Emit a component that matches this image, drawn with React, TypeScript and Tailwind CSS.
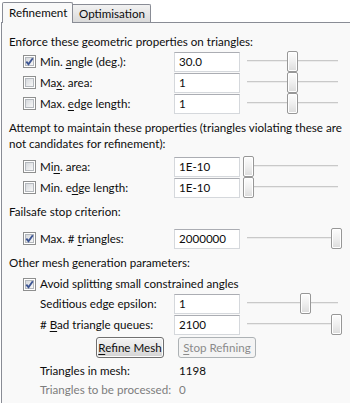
import React from 'react';

type Mn = { pre: string; key: string; post: string };

function Label({ m, className = '' }: { m: Mn; className?: string }) {
  return (
    <span className={className}>
      {m.pre}
      <span className="underline underline-offset-[2px]">{m.key}</span>
      {m.post}
    </span>
  );
}

function Check({ checked }: { checked?: boolean }) {
  return (
    <span className="relative flex h-[13px] w-[13px] shrink-0 items-center justify-center border border-[#8e8f8f] bg-white">
      <span className="h-[9px] w-[9px] border border-[#b4b8bd] bg-gradient-to-br from-[#d6d9dd] to-[#f7f7f7]" />
      {checked && (
        <svg className="absolute left-0 top-0" width="11" height="11" viewBox="0 0 11 11">
          <path d="M2.3 5.6 L4.5 8.2 L8.8 2.3" fill="none" stroke="#3d5593" strokeWidth="1.9" />
        </svg>
      )}
    </span>
  );
}

function Field({ value }: { value: string }) {
  return (
    <div className="flex h-[20px] w-[66px] shrink-0 items-center border border-[#d5d8dc] border-t-[#abadb3] bg-white pl-[4px]">
      {value}
    </div>
  );
}

function Slider({ pos }: { pos: number }) {
  return (
    <div className="relative ml-[3px] h-[21px] w-[99px] shrink-0">
      <div className="absolute left-[4px] right-[4px] top-[9px] h-[2px] border-t border-[#c9c9c9] bg-[#ececec]" />
      <div
        className="absolute top-0 h-[21px] w-[11px] rounded-[2px] border border-[#979797] bg-gradient-to-b from-[#fdfdfd] via-[#efefef] to-[#dcdcdc] shadow-[inset_0_0_0_1px_#ffffff]"
        style={{ left: pos }}
      />
    </div>
  );
}

function Row({
  m,
  check,
  value,
  pos,
}: {
  m: Mn;
  check?: boolean;
  value: string;
  pos: number;
}) {
  return (
    <div className="flex h-[21px] items-center">
      <div className="flex w-[165px] shrink-0 items-center gap-[4px] pl-[14px]">
        {check !== undefined ? <Check checked={check} /> : <span className="w-[13px]" />}
        <Label m={m} />
      </div>
      <Field value={value} />
      <Slider pos={pos} />
    </div>
  );
}

export default function App() {
  return (
    <div className="h-[403px] w-[350px] overflow-hidden whitespace-nowrap bg-white font-['Lato',sans-serif] text-[11.6px] leading-[16px] text-[#0d0d0d]">
      {/* tabs */}
      <div className="flex h-[22px] items-end pl-[2px]">
        <div className="relative z-10 -mb-px flex h-[21px] w-[71px] items-center rounded-t-[2px] border border-b-0 border-[#898c95] bg-[#f9f9f9] pl-[6px]">
          Refinement
        </div>
        <div className="flex h-[18px] w-[78px] items-center rounded-tr-[2px] border border-b-0 border-l-0 border-[#898c95] bg-gradient-to-b from-[#f2f2f2] to-[#dadada] pl-[6px]">
          Optimisation
        </div>
      </div>

      {/* pane */}
      <div className="ml-[1px] h-[381px] border-l border-t border-[#898c95] bg-[#f9f9f9] pl-[7px] pt-[11px]">
        <div>Enforce these geometric properties on triangles:</div>
        <div className="mt-px">
          <Row m={{ pre: 'Min. ', key: 'a', post: 'ngle (deg.):' }} check value="30.0" pos={44} />
          <Row m={{ pre: 'Ma', key: 'x', post: '. area:' }} check={false} value="1" pos={44} />
          <Row m={{ pre: 'Max. ', key: 'e', post: 'dge length:' }} check={false} value="1" pos={44} />
        </div>

        <div className="mt-[6px]">
          Attempt to maintain these properties (triangles violating these are
          <br />
          not candidates for refinement):
        </div>
        <div className="mt-[4px]">
          <Row m={{ pre: 'Mi', key: 'n', post: '. area:' }} check={false} value="1E-10" pos={0} />
          <Row m={{ pre: 'Min. e', key: 'd', post: 'ge length:' }} check={false} value="1E-10" pos={0} />
        </div>

        <div className="mt-[6px]">Failsafe stop criterion:</div>
        <div className="mt-[8px]">
          <Row m={{ pre: 'Max. # ', key: 't', post: 'riangles:' }} check value="2000000" pos={88} />
        </div>

        <div className="mt-[6px]">Other mesh generation parameters:</div>
        <div className="mt-[4px] flex h-[18px] items-center gap-[4px] pl-[14px]">
          <Check checked />
          <span>Avoid splitting small constrained angles</span>
        </div>
        <Row m={{ pre: 'Seditious edge epsilon:', key: '', post: '' }} value="1" pos={57} />
        <Row m={{ pre: '# ', key: 'B', post: 'ad triangle queues:' }} value="2100" pos={88} />

        <div className="mt-[2px] flex h-[21px] items-center">
          <div className="flex w-[165px] shrink-0 justify-end pr-[10px]">
            <div className="flex h-[21px] w-[68px] items-center justify-center rounded-[3px] border border-[#707070] bg-gradient-to-b from-[#f3f3f3] via-[#e6e6e6] to-[#d3d3d3] shadow-[inset_0_0_0_1px_#fcfcfc]">
              <Label m={{ pre: '', key: 'R', post: 'efine Mesh' }} />
            </div>
          </div>
          <div className="ml-[4px] flex h-[21px] w-[78px] items-center justify-center rounded-[3px] border border-[#adb2b5] bg-[#f4f4f4] text-[#8b8b8b]">
            <Label m={{ pre: '', key: 'S', post: 'top Refining' }} />
          </div>
        </div>

        <div className="mt-[3px] flex h-[19px] items-center">
          <div className="w-[165px] shrink-0 pl-[31px]">Triangles in mesh:</div>
          <div className="pl-[5px]">1198</div>
        </div>
        <div className="flex h-[19px] items-center text-[#7d7d7d]">
          <div className="w-[165px] shrink-0 pl-[31px]">Triangles to be processed:</div>
          <div className="pl-[5px]">0</div>
        </div>
      </div>
    </div>
  );
}
